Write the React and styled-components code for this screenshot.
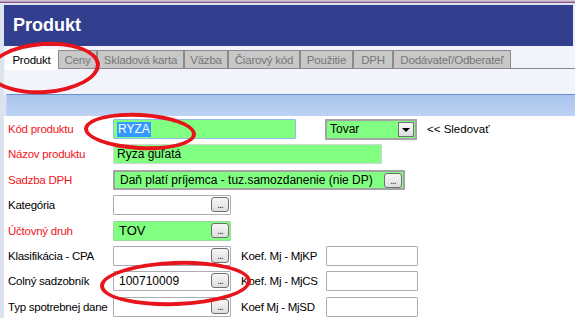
import React from "react";
import styled, { createGlobalStyle } from "styled-components";

const GlobalStyle = createGlobalStyle`
  body {
    margin: 0;
    font-family: "Liberation Sans", Arial, sans-serif;
  }
`;

const tabs = [
  "Produkt",
  "Ceny",
  "Skladová karta",
  "Väzba",
  "Čiarový kód",
  "Použitie",
  "DPH",
  "Dodávateľ/Odberateľ",
];

const tabWidths = [53, 39, 87, 44, 72, 53, 40, 118];

const App = () => {
  return (
    <Window>
      <GlobalStyle />
      <TopRule />
      <Header>Produkt</Header>
      <TabStrip>
        {tabs.map((t, i) => (
          <Tab key={t} $active={i === 0} $w={tabWidths[i]}>
            {t}
          </Tab>
        ))}
        <TabFill />
      </TabStrip>
      <TabPanel>
        <Toolbar />
      </TabPanel>
      <Form>
        <Row>
          <Label $required>Kód produktu</Label>
          <Field $w={183} $green $border="focus">
            <Selected>RYZA</Selected>
          </Field>
          <Select>
            Tovar
            <DropButton>
              <Arrow />
            </DropButton>
          </Select>
          <Hint>&lt;&lt; Sledovať</Hint>
        </Row>
        <Row>
          <Label $required>Názov produktu</Label>
          <Field $w={269} $green $border="light">
            Ryza guľatá
          </Field>
        </Row>
        <Row>
          <Label $required>Sadzba DPH</Label>
          <Field $w={292} $green $border="dark" $pad={5}>
            Daň platí príjemca - tuz.samozdanenie (nie DP)
            <Dots>...</Dots>
          </Field>
        </Row>
        <Row>
          <Label>Kategória</Label>
          <Field $w={118}>
            <Dots>...</Dots>
          </Field>
        </Row>
        <Row>
          <Label $required>Účtovný druh</Label>
          <Field $w={118} $green $border="green" $pad={5} $big>
            TOV
            <Dots>...</Dots>
          </Field>
        </Row>
        <Row>
          <Label>Klasifikácia - CPA</Label>
          <Field $w={118}>
            <Dots>...</Dots>
          </Field>
          <SubLabel>Koef. Mj - MjKP</SubLabel>
          <Field $w={92} />
        </Row>
        <Row>
          <Label>Colný sadzobník</Label>
          <Field $w={118} $pad={5}>
            100710009
            <Dots>...</Dots>
          </Field>
          <SubLabel>Koef. Mj - MjCS</SubLabel>
          <Field $w={92} />
        </Row>
        <Row>
          <Label>Typ spotrebnej dane</Label>
          <Field $w={118}>
            <Dots>...</Dots>
          </Field>
          <SubLabel>Koef Mj - MjSD</SubLabel>
          <Field $w={92} />
        </Row>
      </Form>

      <Mark $x={-12} $y={42} $w={104} $h={44} $r={-4} />
      <Mark $x={84} $y={113} $w={104} $h={29} $r={3} />
      <Mark $x={100} $y={261} $w={143} $h={37} $r={-2} />
    </Window>
  );
};

export default App;

const Window = styled.div`
  position: relative;
  width: 575px;
  height: 318px;
  overflow: hidden;
  background: #dce3ef;
  padding-left: 4px;
  box-sizing: border-box;
  font-size: 12px;
  color: #000;
`;

const TopRule = styled.div`
  height: 1px;
  margin-left: -4px;
  border-top: 1px solid #cfc6d4;
  border-bottom: 1px solid #8b5e8d;
  background: #b89bb8;
  margin-bottom: 2px;
`;

const Header = styled.div`
  height: 41px;
  background: #323f8f;
  color: #fff;
  font-weight: 700;
  font-size: 18px;
  display: flex;
  align-items: center;
  padding-left: 9px;
  border-right: 2px solid #e8ecf6;
`;

const TabStrip = styled.div`
  display: flex;
  align-items: flex-end;
  height: 23px;
  background: #f1f4fa;
  padding-left: 1px;
`;

const Tab = styled.div`
  width: ${(p) => p.$w}px;
  height: ${(p) => (p.$active ? 21 : 19)}px;
  box-sizing: border-box;
  display: flex;
  align-items: center;
  justify-content: center;
  background: ${(p) => (p.$active ? "#fff" : "#c8c8c8")};
  color: ${(p) => (p.$active ? "#000" : "#767676")};
  border: ${(p) => (p.$active ? "none" : "1px solid #8a8a8a")};
  border-bottom: ${(p) => (p.$active ? "none" : "1px solid #8a8a8a")};
  margin-bottom: ${(p) => (p.$active ? "-1px" : "0")};
  font-size: 11.5px;
  letter-spacing: -0.2px;
  white-space: nowrap;
  overflow: hidden;
`;

const TabFill = styled.div`
  flex: 1;
  align-self: stretch;
  border-bottom: 1px solid #8a8a8a;
`;

const TabPanel = styled.div`
  height: 26px;
  background: #f1f4fa;
  display: flex;
  align-items: flex-end;
  padding-left: 2px;
`;

const Toolbar = styled.div`
  flex: 1;
  height: 21px;
  margin-bottom: -21px;
  border-top: 1px solid #6b8fcc;
  border-left: 1px solid #c4d4ee;
  background: linear-gradient(#a9c5ee, #bdd2f3);
`;

const Form = styled.div`
  background: #fff;
  height: 210px;
  margin-top: 21px;
  padding: 3px 0 0 4px;
  display: flex;
  flex-direction: column;
  gap: 5.4px;
`;

const Row = styled.div`
  display: flex;
  align-items: center;
  height: 20px;
`;

const Label = styled.div`
  width: 105px;
  color: ${(p) => (p.$required ? "#f0141c" : "#000")};
  font-size: 11.5px;
  letter-spacing: -0.25px;
  white-space: nowrap;
`;

const borders = {
  focus: "1px solid #8ebde9",
  light: "1px solid #d4d4d4",
  dark: "2px solid #a3a3a3",
  green: "1px solid #9fd89f",
  plain: "1px solid #abadb3",
};

const Field = styled.div`
  position: relative;
  width: ${(p) => p.$w}px;
  height: 20px;
  box-sizing: border-box;
  background: ${(p) => (p.$green ? "#80ff80" : "#fff")};
  border: ${(p) => borders[p.$border || "plain"]};
  border-radius: 1px;
  display: flex;
  align-items: center;
  padding-left: ${(p) => p.$pad ?? 3}px;
  font-size: ${(p) => (p.$big ? 13 : 12)}px;
  white-space: nowrap;
  overflow: hidden;
`;

const Selected = styled.span`
  background: #3399ff;
  color: #fff;
  padding: 0 1px;
  line-height: 15px;
`;

const Dots = styled.div`
  position: absolute;
  right: 1px;
  top: 1px;
  width: 18px;
  height: 15px;
  box-sizing: border-box;
  border: 1px solid #707070;
  border-radius: 3px;
  background: linear-gradient(#f6f6f6, #dedede);
  font-size: 10px;
  line-height: 14px;
  text-align: center;
  color: #333;
  letter-spacing: -1px;
`;

const Select = styled.div`
  position: relative;
  width: 92px;
  height: 21px;
  margin-left: 29px;
  box-sizing: border-box;
  border: 2px solid #a3a3a3;
  background: #80ff80;
  display: flex;
  align-items: center;
  padding-left: 3px;
  font-size: 12px;
`;

const DropButton = styled.div`
  position: absolute;
  right: 1px;
  top: 1px;
  width: 16px;
  height: 15px;
  box-sizing: border-box;
  border: 1px solid #707070;
  background: linear-gradient(#fafafa, #dcdcdc);
  display: flex;
  align-items: center;
  justify-content: center;
`;

const Arrow = styled.div`
  width: 0;
  height: 0;
  border-left: 4px solid transparent;
  border-right: 4px solid transparent;
  border-top: 4px solid #000;
  margin-top: 2px;
`;

const Hint = styled.div`
  margin-left: 10px;
  font-size: 11.5px;
`;

const SubLabel = styled.div`
  width: 85px;
  padding-left: 10px;
  font-size: 11.5px;
  letter-spacing: -0.25px;
  white-space: nowrap;
`;

const Mark = styled.div`
  position: absolute;
  left: ${(p) => p.$x}px;
  top: ${(p) => p.$y}px;
  width: ${(p) => p.$w}px;
  height: ${(p) => p.$h}px;
  border: 4px solid #e8141c;
  border-radius: 50%;
  transform: rotate(${(p) => p.$r}deg);
  pointer-events: none;
`;
